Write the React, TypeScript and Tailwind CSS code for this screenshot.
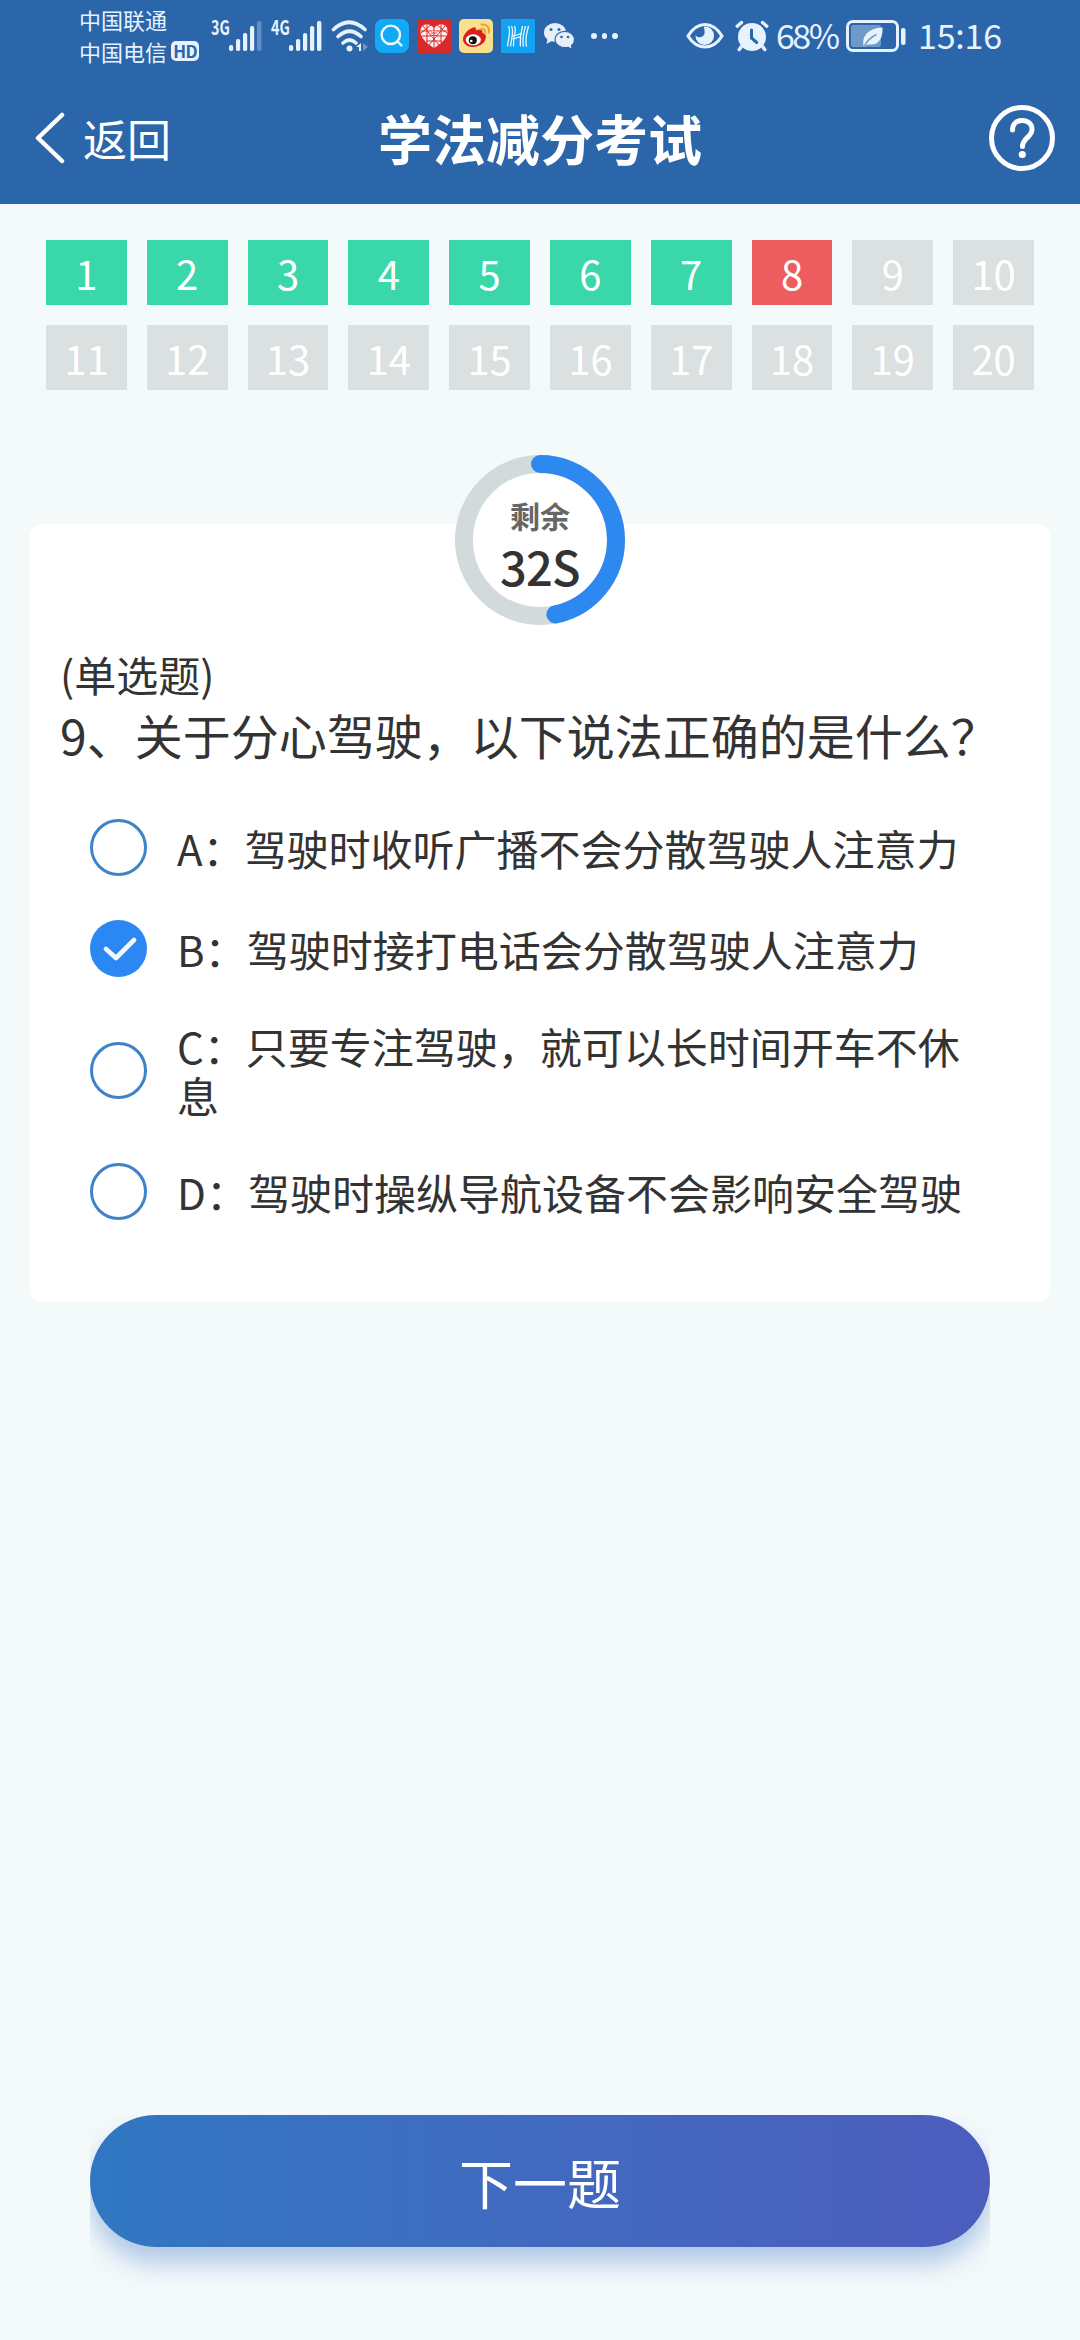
import clsx from "clsx";

type TileState = "correct" | "wrong" | "pending";

interface Option {
	key: string;
	text: string;
}

const TOTAL_SECONDS = 60;
const SECONDS_LEFT = 32;

const tiles: { no: number; state: TileState }[] = Array.from(
	{ length: 20 },
	(_, i) => ({
		no: i + 1,
		state: i < 7 ? "correct" : i === 7 ? "wrong" : "pending",
	}),
);

const options: Option[] = [
	{ key: "A", text: "驾驶时收听广播不会分散驾驶人注意力" },
	{ key: "B", text: "驾驶时接打电话会分散驾驶人注意力" },
	{ key: "C", text: "只要专注驾驶，就可以长时间开车不休息" },
	{ key: "D", text: "驾驶时操纵导航设备不会影响安全驾驶" },
];

function Signal({ label, weakLast }: { label: string; weakLast?: boolean }) {
	return (
		<div className="flex h-8 items-start">
			<span className="w-[18px] origin-left scale-x-[.72] text-[20px] leading-[14px] font-bold">
				{label}
			</span>
			<svg width="33" height="32" viewBox="0 0 33 32" fill="currentColor">
				<rect x="0" y="25" width="4.2" height="6" rx="1.8" />
				<rect x="7" y="19" width="4.2" height="12" rx="1.8" />
				<rect x="14" y="13" width="4.2" height="18" rx="1.8" />
				<rect x="21" y="6" width="4.2" height="25" rx="1.8" />
				<rect
					x="28"
					y="1"
					width="4.4"
					height="30"
					rx="1.8"
					opacity={weakLast ? 0.3 : 1}
				/>
			</svg>
		</div>
	);
}

function WifiIcon() {
	return (
		<svg
			width="38"
			height="32"
			viewBox="0 0 38 32"
			fill="none"
			stroke="currentColor"
			strokeWidth="3.6"
			strokeLinecap="round"
		>
			<path d="M2.5 9.5Q18 -5 34 9.5" />
			<path d="M7 16.5Q18.5 6 30 16.5" />
			<path d="M12 23Q18.5 17 25 23" />
			<circle cx="18.5" cy="28.5" r="3" fill="currentColor" stroke="none" />
			<path d="M30 23v8h-2v-4h-3z" fill="currentColor" stroke="none" />
			<path
				d="M32 23l5 4-5 4z"
				fill="currentColor"
				stroke="none"
				opacity=".35"
			/>
		</svg>
	);
}

function SearchAppIcon() {
	return (
		<svg width="34" height="34" viewBox="0 0 34 34" fill="none">
			<rect width="34" height="34" rx="8" fill="#12aaf5" />
			<g stroke="#f2fbff" strokeWidth="2.4" strokeLinecap="round">
				<circle cx="15.8" cy="15.8" r="9.2" />
				<path d="M22.5 22.5l4 4" />
			</g>
		</svg>
	);
}

function HeartAppIcon() {
	return (
		<svg width="34" height="34" viewBox="0 0 34 34" fill="none">
			<rect width="34" height="34" rx="1.5" fill="#d62a2b" />
			<path
				d="M17 29C12 26 3.5 20 3.5 12.5 3.5 7 7 5.5 10 5.5c3 0 5.5 1.5 7 4 1.5-2.5 4-4 7-4s6.500 1.500 6.500 7C30.5 20 22 26 17 29z"
				fill="#fff0ee"
			/>
			<g stroke="#d62a2b" strokeWidth="1">
				<path d="M4 12h26M5 17h24M9 22h16M17 9v20M10 6v18M24 6v18M6 7l16 19M28 7L12 26M4 14l10-8M30 14L20 6" />
			</g>
			<rect x="14" y="12" width="6" height="6" rx="2.5" fill="#fff0ee" />
			<path d="M14 14h6M14 16.5h6M17 12v6" stroke="#d62a2b" strokeWidth=".9" />
		</svg>
	);
}

function WeiboAppIcon() {
	return (
		<svg width="34" height="34" viewBox="0 0 34 34" fill="none">
			<rect width="34" height="34" rx="5" fill="#fbe08b" />
			<path
				d="M13 9c2.5-1.5 4.5-.5 4 2.500 3-1.5 7-1.5 6.500 2.200 2.800.9 3.800 3 3.300 5.300C26 24.5 20 28 14 28S4 24.5 4 20c0-4 5-9.500 9-11z"
				fill="#d9201f"
			/>
			<ellipse cx="14.3" cy="20.8" rx="7.6" ry="5.5" fill="#fff" />
			<circle cx="13.8" cy="21.3" r="4" fill="#111" />
			<circle cx="12.3" cy="22" r="1.3" fill="#fff" />
			<g stroke="#e8a233" strokeWidth="2" strokeLinecap="round">
				<path d="M22.5 5.500c5-.8 8.500 3 7.300 8" />
				<path d="M22.5 9.800c2.600-.3 4 1.400 3.500 3.700" />
			</g>
		</svg>
	);
}

function WaveAppIcon() {
	return (
		<svg width="34" height="34" viewBox="0 0 34 34" fill="none">
			<rect width="34" height="34" rx="1" fill="#12a2f2" />
			<g stroke="#e9f8ff" strokeWidth="1.3">
				<path d="M7.500 7c3 6-.5 13-1 20.500M10.500 7c3 6-.5 13-1 20.500M13.500 7c2 4 0 8-.5 11-.3 3-.5 6-.5 9.500" />
				<path d="M27.500 7c-1.500 7-4 13-2 20.500M24.500 7c-1.500 7-4 13-2 20.500M21.500 7c-.5 4-2 8-2 11 0 3-.5 6 0 9.500" />
				<path d="M12 16.500c3 1 6-2.500 9-1.500M11.500 19.500c3.500 1 6-2.500 8.500-1.500" />
			</g>
		</svg>
	);
}

function WechatIcon() {
	return (
		<svg width="33" height="34" viewBox="0 0 33 34">
			<path d="M5 18l-1.500 7 6-3.500z" fill="#e6f0fb" />
			<ellipse cx="12" cy="13.5" rx="11" ry="9.500" fill="#e6f0fb" />
			<path
				d="M31.500 20.500c0 3-1.500 5-3 6l.8 4-4-2.200c-7 1.500-13.300-2.300-13.300-7.800 0-4.600 4.400-8.200 9.800-8.200s9.700 3.600 9.700 8.200z"
				fill="#e6f0fb"
				stroke="#2b65aa"
				strokeWidth="1.2"
			/>
			<g fill="#2b65aa">
				<circle cx="8" cy="10.5" r="1.500" />
				<circle cx="16" cy="10.5" r="1.500" />
				<circle cx="18.5" cy="18" r="1.300" />
				<circle cx="25" cy="18" r="1.300" />
			</g>
		</svg>
	);
}

function EyeIcon() {
	return (
		<svg width="38" height="28" viewBox="0 0 38 28" fill="none">
			<path
				d="M2 14C7 6 12.500 2.500 19 2.500S31 6 36 14C31 22 25.500 25 19 25S7 22 2 14z"
				stroke="currentColor"
				strokeWidth="3.2"
				strokeLinejoin="round"
			/>
			<path
				d="M18 4.500a9.300 9.300 0 1 1-8.500 8.500c2 3.500 8 3 9-1.500.5-3-.5-5-.5-7z"
				fill="currentColor"
			/>
		</svg>
	);
}

function AlarmIcon() {
	return (
		<svg width="34" height="32" viewBox="0 0 34 32" fill="none">
			<circle cx="17" cy="17" r="14" fill="currentColor" />
			<g stroke="currentColor" strokeWidth="3.4" strokeLinecap="round">
				<path d="M2.200 6.200L6.500 2.500M31.800 6.200L27.500 2.500M6 27l-1.800 2.600M28 27l1.800 2.600" />
			</g>
			<path
				d="M16.500 10v8l5.200 4.500"
				stroke="#2b65aa"
				strokeWidth="3"
				strokeLinecap="round"
			/>
		</svg>
	);
}

function BatteryIcon() {
	return (
		<svg width="60" height="34" viewBox="0 0 60 34" fill="none">
			<rect
				x="1.5"
				y="2.5"
				width="50"
				height="29"
				rx="5.5"
				stroke="currentColor"
				strokeWidth="3"
			/>
			<rect x="5" y="6" width="30" height="22" rx="2" fill="#6d9aca" />
			<rect x="55" y="9" width="4.5" height="17" rx="2" fill="currentColor" />
			<path
				d="M36.500 8.500c.5 11-4 17-11 17-2.300 0-4-.5-5.500.8l-2 1.700c-3-9 3-19 18.500-19.500z"
				fill="currentColor"
			/>
			<path d="M18 27.500c3-5.500 7-9.500 12.500-12" stroke="#6d9aca" strokeWidth="1.5" />
		</svg>
	);
}

function StatusBar() {
	return (
		<div className="flex h-[72px] items-start text-[#e6f3ff]">
			<div className="flex w-[131px] flex-col pt-[3px] pl-[79px] text-[22px] leading-8 whitespace-nowrap">
				<span>中国联通</span>
				<span className="flex items-center gap-1">
					中国电信
					<span className="flex h-5 w-7 shrink-0 items-center justify-center rounded-[5px] bg-[#e6f3ff] text-[17px] leading-5 font-bold tracking-tighter text-[#2b65aa]">
						HD
					</span>
				</span>
			</div>
			<div className="ml-20 flex pt-5">
				<Signal label="3G" weakLast />
				<div className="ml-[9px]">
					<Signal label="4G" />
				</div>
				<div className="ml-[9px]">
					<WifiIcon />
				</div>
			</div>
			<div className="ml-[6px] flex gap-2 pt-[19px]">
				<SearchAppIcon />
				<HeartAppIcon />
				<WeiboAppIcon />
				<WaveAppIcon />
				<WechatIcon />
			</div>
			<div className="ml-[15px] flex gap-[5px] pt-[33px]">
				<span className="size-[5.5px] rounded-full bg-current" />
				<span className="size-[5.5px] rounded-full bg-current" />
				<span className="size-[5.5px] rounded-full bg-current" />
			</div>
			<div className="mr-[76px] ml-auto flex h-[72px] items-center">
				<EyeIcon />
				<div className="ml-[11px]">
					<AlarmIcon />
				</div>
				<span className="ml-[7px] w-[70px] pb-[3px] text-[34px] tracking-[-2.5px]">
					68%
				</span>
				<BatteryIcon />
				<span className="ml-[12px] w-[86px] pb-[3px] text-[34px] tracking-[-.2px]">
					15:16
				</span>
			</div>
		</div>
	);
}

function NavBar() {
	return (
		<div className="grid h-[132px] grid-cols-[1fr_auto_1fr] items-center px-[25px] text-white">
			<button
				type="button"
				className="flex items-center gap-[18px] pl-[10px] text-left"
			>
				<svg width="30" height="52" viewBox="0 0 30 52" fill="none">
					<path
						d="M27 3L3 26l24 23"
						stroke="currentColor"
						strokeWidth="4.5"
						strokeLinecap="round"
						strokeLinejoin="round"
					/>
				</svg>
				<span className="text-[44px] leading-[60px]">返回</span>
			</button>
			<h1 className="text-[54px] leading-[70px] font-bold">学法减分考试</h1>
			<svg
				className="justify-self-end"
				width="66"
				height="66"
				viewBox="0 0 66 66"
				fill="none"
				stroke="currentColor"
				strokeWidth="5"
			>
				<circle cx="33" cy="33" r="30.5" />
				<path
					d="M23.500 25c0-6 4-9.500 9.700-9.500s9.800 3.500 9.800 9c0 7.500-9.500 8.500-9.500 17"
					strokeLinecap="round"
				/>
				<circle cx="33.3" cy="49.5" r="3.6" fill="currentColor" stroke="none" />
			</svg>
		</div>
	);
}

function CountdownRing() {
	const radius = 76;
	const length = 2 * Math.PI * radius;
	const elapsed = (TOTAL_SECONDS - SECONDS_LEFT) / TOTAL_SECONDS;
	return (
		<div className="grid size-[170px] place-items-center">
			<svg
				className="col-start-1 row-start-1"
				width="170"
				height="170"
				viewBox="0 0 170 170"
				strokeWidth="18"
			>
				<circle cx="85" cy="85" r={radius} fill="#fff" stroke="#d3dadb" />
				<circle
					cx="85"
					cy="85"
					r={radius}
					fill="none"
					stroke="#2d89f0"
					strokeLinecap="round"
					strokeDasharray={`${length * elapsed} ${length}`}
					transform="rotate(-90 85 85)"
				/>
			</svg>
			<div className="col-start-1 row-start-1 flex flex-col items-center pt-[6px]">
				<span className="text-[30px] leading-[46px] font-bold text-[#666]">
					剩余
				</span>
				<span className="text-[47px] leading-[56px] font-medium tracking-[-.8px] text-[#333]">
					{SECONDS_LEFT}S
				</span>
			</div>
		</div>
	);
}

function Radio({ checked }: { checked: boolean }) {
	if (!checked) {
		return (
			<span className="size-[57px] shrink-0 rounded-full border-[3px] border-[#3f82c8]" />
		);
	}
	return (
		<span className="flex size-[57px] shrink-0 items-center justify-center rounded-full bg-[#2b87f3]">
			<svg
				className="ml-[3px]"
				width="34"
				height="26"
				viewBox="0 0 34 26"
				fill="none"
			>
				<path
					d="M3 13l10 9L31 4"
					stroke="#f2f9ff"
					strokeWidth="4.6"
					strokeLinecap="round"
					strokeLinejoin="round"
				/>
			</svg>
		</span>
	);
}

export default function App() {
	const selected = "B";
	return (
		<div className="flex h-[2340px] w-[1080px] flex-col bg-[#f4f9fa] font-['Noto_Sans_CJK_SC',sans-serif]">
			<header className="h-[204px] bg-[#2b65aa]">
				<StatusBar />
				<NavBar />
			</header>

			<div className="mx-[46px] mt-9 grid grid-cols-10 gap-x-5 gap-y-5">
				{tiles.map((tile) => (
					<div
						key={tile.no}
						className={clsx(
							"flex h-[65px] items-center justify-center text-[40px] leading-none text-white",
							tile.state === "correct" && "bg-[#3ad7aa]",
							tile.state === "wrong" && "bg-[#ed5c5f]",
							tile.state === "pending" && "bg-[#dbe0e0]",
						)}
					>
						{tile.no}
					</div>
				))}
			</div>

			<main className="mx-[30px] mt-[134px] h-[778px] rounded-xl bg-white px-[30px] text-[#333]">
				<div className="-mt-[69px] flex justify-center">
					<CountdownRing />
				</div>
				<p className="mt-[21px] text-[42px] leading-[56px]">(单选题)</p>
				<h2 className="text-[48px] leading-[64px] whitespace-nowrap">
					9、关于分心驾驶，以下说法正确的是什么？
				</h2>
				<ul className="mt-[53px] flex flex-col gap-11 pl-[30px]">
					{options.map((option) => (
						<li
							key={option.key}
							className="flex min-h-[57px] items-center gap-[30px]"
						>
							<Radio checked={option.key === selected} />
							<span className="w-[800px] text-[42px] leading-[49px]">
								{option.key}：{option.text}
							</span>
						</li>
					))}
				</ul>
			</main>

			{/* the shadow is cut off at the button's own left and right edges */}
			<div className="mx-[90px] mt-auto h-[225px] overflow-hidden">
				<button
					type="button"
					className="h-[132px] w-full rounded-full bg-linear-to-r from-[#3077c1] to-[#4c5dbd] text-[54px] text-white shadow-[0_16px_24px_rgba(45,110,195,0.35)]"
				>
					下一题
				</button>
			</div>
		</div>
	);
}
